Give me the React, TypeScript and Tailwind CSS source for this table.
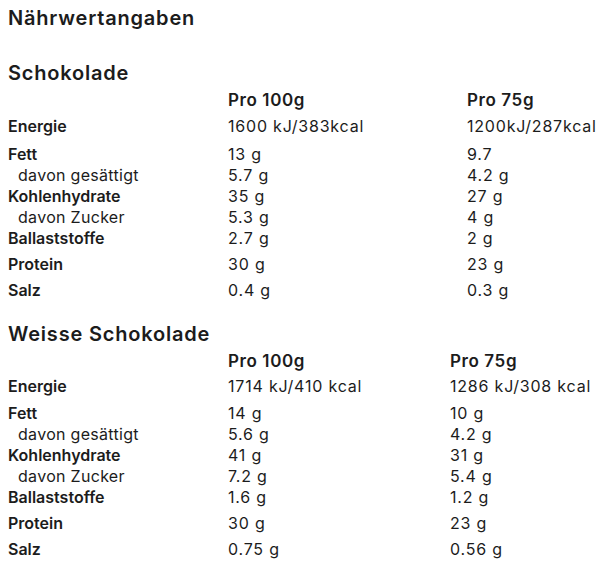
type Row = {
  label: string;
  a: string;
  b: string;
  sub?: boolean;
  gap?: boolean;
};

const dark: Row[] = [
  { label: "Fett", a: "13 g", b: "9.7", gap: true },
  { label: "davon gesättigt", a: "5.7 g", b: "4.2 g", sub: true },
  { label: "Kohlenhydrate", a: "35 g", b: "27 g" },
  { label: "davon Zucker", a: "5.3 g", b: "4 g", sub: true },
  { label: "Ballaststoffe", a: "2.7 g", b: "2 g" },
  { label: "Protein", a: "30 g", b: "23 g", gap: true },
  { label: "Salz", a: "0.4 g", b: "0.3 g", gap: true },
];

const white: Row[] = [
  { label: "Fett", a: "14 g", b: "10 g", gap: true },
  { label: "davon gesättigt", a: "5.6 g", b: "4.2 g", sub: true },
  { label: "Kohlenhydrate", a: "41 g", b: "31 g" },
  { label: "davon Zucker", a: "7.2 g", b: "5.4 g", sub: true },
  { label: "Ballaststoffe", a: "1.6 g", b: "1.2 g" },
  { label: "Protein", a: "30 g", b: "23 g", gap: true },
  { label: "Salz", a: "0.75 g", b: "0.56 g", gap: true },
];

function Table({
  energy,
  rows,
  col2,
  energyH,
}: {
  energy: [string, string];
  rows: Row[];
  col2: string;
  energyH: string;
}) {
  return (
    <div className="text-[16px]">
      {/* header */}
      <div className="flex h-[27px] items-center text-[17px] font-semibold tracking-[0.6px]">
        <div className="w-[220px]" />
        <div className={col2}>Pro 100g</div>
        <div>Pro 75g</div>
      </div>
      <div className={`flex items-center ${energyH}`}>
        <div className="w-[220px] font-semibold">Energie</div>
        <div className={`${col2} tracking-[0.8px]`}>{energy[0]}</div>
        <div className="tracking-[0.8px]">{energy[1]}</div>
      </div>
      {rows.map((r) => (
        <div
          key={r.label}
          className={`flex h-[21px] items-center box-content ${r.gap ? "pt-[5px]" : ""}`}
        >
          <div
            className={`w-[220px] ${r.sub ? "pl-[10px] font-normal tracking-[0.3px]" : "font-semibold"}`}
          >
            {r.label}
          </div>
          <div className={`${col2} tracking-[0.8px]`}>{r.a}</div>
          <div className="tracking-[0.8px]">{r.b}</div>
        </div>
      ))}
    </div>
  );
}

export default function App() {
  return (
    <main
      className="min-h-screen bg-white px-2 text-[#1c1c1c]"
      style={{ fontFamily: "Inter, 'Noto Sans', sans-serif" }}
    >
      <h1 className="pt-1 text-[20px] leading-[28px] font-semibold tracking-[0.8px]">
        Nährwertangaben
      </h1>

      {/* Schokolade */}
      <h2 className="mt-[27px] text-[20px] leading-[28px] font-semibold tracking-[0.8px]">
        Schokolade
      </h2>
      <Table
        energy={["1600 kJ/383kcal", "1200kJ/287kcal"]}
        rows={dark}
        col2="w-[239px]"
        energyH="h-[24px]"
      />

      {/* Weisse Schokolade */}
      <h2 className="mt-[20px] text-[20px] leading-[28px] font-semibold tracking-[0.8px]">
        Weisse Schokolade
      </h2>
      <Table
        energy={["1714 kJ/410 kcal", "1286 kJ/308 kcal"]}
        rows={white}
        col2="w-[222px]"
        energyH="h-[22px]"
      />
    </main>
  );
}
